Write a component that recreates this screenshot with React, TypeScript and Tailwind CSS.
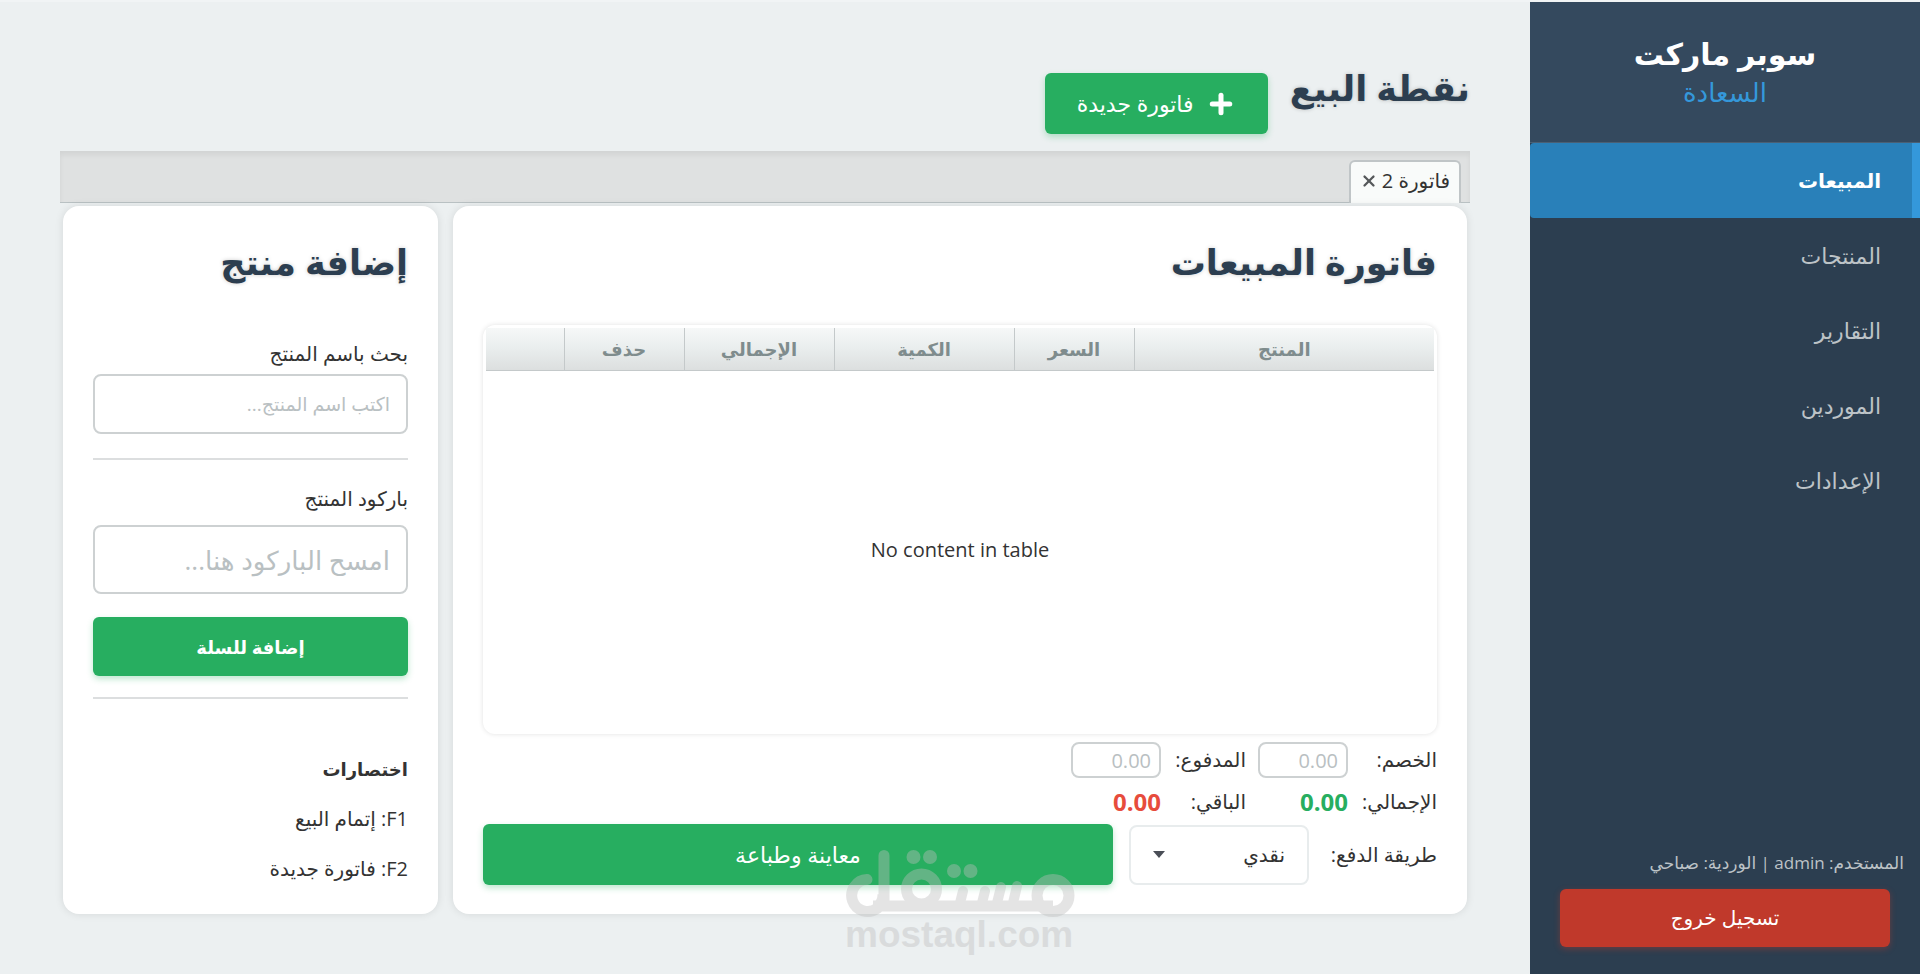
import { Plus, X } from "lucide-react";

const navItems = ["المبيعات", "المنتجات", "التقارير", "الموردين", "الإعدادات"];

const columns = [
  { label: "المنتج", width: "w-[300px]" },
  { label: "السعر", width: "w-[120px]" },
  { label: "الكمية", width: "w-[180px]" },
  { label: "الإجمالي", width: "w-[150px]" },
  { label: "حذف", width: "w-[120px]" },
  { label: "", width: "" },
];

const greenButton = "rounded-md bg-[#27ae60] text-white shadow-[0_3px_6px_rgba(39,174,96,0.3)]";
const field =
  "w-full rounded-lg border-2 border-[#cdd1d2] bg-white text-[#333] placeholder:text-[#b9c0c2] placeholder:opacity-100";
const title = "font-bold text-[#2c3e50] [text-shadow:0_0_4px_rgba(0,0,0,0.2)]";

function Sidebar() {
  return (
    <aside className="flex w-[390px] shrink-0 flex-col bg-[#2c3e50]">
      <div className="flex h-[141px] flex-col items-center border-b border-[#4a6075] bg-[#34495e] pt-8">
        <p className="text-[30px] leading-10 font-bold text-white">سوبر ماركت</p>
        <p className="text-[26px] leading-9 text-[#3498db]">السعادة</p>
      </div>

      <nav className="flex flex-col">
        {navItems.map((item, i) => (
          <a
            key={item}
            href="#"
            aria-current={i === 0 ? "page" : undefined}
            className={
              i === 0
                ? "flex h-[75px] items-center rounded-l-sm border-r-8 border-[#3498db] bg-[#2980b9] pr-[31px] text-xl font-bold text-white"
                : "flex h-[75px] items-center pr-[39px] text-[22px] text-[#bdc3c7]"
            }
          >
            {item}
          </a>
        ))}
      </nav>

      <div className="mt-auto pb-[27px]">
        <p className="px-4 text-[17px] leading-6 text-[#bdc3c7]">المستخدم: admin | الوردية: صباحي</p>
        <div className="px-[30px] pt-3.5">
          <button className="h-[58px] w-full rounded-md bg-[#c0392b] text-xl text-white shadow-[0_2px_6px_rgba(192,57,43,0.4)]">
            تسجيل خروج
          </button>
        </div>
      </div>
    </aside>
  );
}

function InvoiceTable() {
  return (
    <div className="flex flex-1 flex-col rounded-xl bg-white px-[3px] pt-[3px] shadow-[0_0_5px_rgba(0,0,0,0.12)]">
      <table className="h-full w-full flex-1 table-fixed border-collapse">
        <thead>
          <tr className="h-[42px] bg-linear-to-b from-[#f6f8f8] via-[#e9eded] to-[#dcdfdf]">
            {columns.map((col) => (
              <th
                key={col.label}
                className={`${col.width} border-b border-l border-[#c4c9ca] text-lg font-bold text-[#7f8c8d] last:border-l-0`}
              >
                {col.label}
              </th>
            ))}
          </tr>
        </thead>
        <tbody>
          <tr>
            <td colSpan={6} className="pb-1 text-center text-xl text-[#333]">
              No content in table
            </td>
          </tr>
        </tbody>
      </table>
    </div>
  );
}

function InvoiceCard() {
  return (
    <section className="flex min-w-0 flex-1 flex-col rounded-2xl bg-white px-[30px] pt-7 pb-[29px] shadow-[0_0_8px_rgba(0,0,0,0.1)]">
      <h2 className={`${title} mb-[35px] text-[35px] leading-[56px]`}>فاتورة المبيعات</h2>
      <InvoiceTable />

      <div className="mt-2 grid grid-cols-[77px_90px_73px_90px] items-center gap-x-3 gap-y-1 text-xl text-[#333]">
        <label htmlFor="discount">الخصم:</label>
        <input id="discount" placeholder="0.00" className={`${field} h-9 px-2`} />
        <label htmlFor="paid">المدفوع:</label>
        <input id="paid" placeholder="0.00" className={`${field} h-9 px-2`} />
        <span>الإجمالي:</span>
        <output className="text-2xl leading-10 font-bold text-[#27ae60]">0.00</output>
        <span>الباقي:</span>
        <output className="text-2xl leading-10 font-bold text-[#e74c3c]">0.00</output>
      </div>

      <div className="mt-0.5 flex items-center gap-4 text-xl text-[#333]">
        <label htmlFor="payment" className="w-28 whitespace-nowrap">
          طريقة الدفع:
        </label>
        <div className="relative">
          <select
            id="payment"
            className="h-[60px] w-[180px] appearance-none rounded-lg border-2 border-[#e8eced] bg-white px-[22px] text-xl"
          >
            <option>نقدي</option>
          </select>
          <svg viewBox="0 0 12 7" className="pointer-events-none absolute top-[26px] left-6 h-[7px] w-3 fill-[#4a4e57]">
            <path d="M0 0h12L6 7z" />
          </svg>
        </div>
        <button className={`${greenButton} h-[61px] flex-1 text-[22px]`}>معاينة وطباعة</button>
      </div>
    </section>
  );
}

function AddProductCard() {
  return (
    <section className="flex w-[375px] shrink-0 flex-col rounded-2xl bg-white px-[30px] pt-7 pb-5 text-xl text-[#333] shadow-[0_0_8px_rgba(0,0,0,0.1)]">
      <h2 className={`${title} mb-9 text-[35px] leading-[56px]`}>إضافة منتج</h2>

      <label htmlFor="product-name" className="mt-3.5 mb-1.5 leading-7">
        بحث باسم المنتج
      </label>
      <input id="product-name" placeholder="اكتب اسم المنتج..." className={`${field} h-[60px] px-4 text-[19px]`} />

      <hr className="mt-6 border-t-2 border-[#dcdedf]" />

      <label htmlFor="barcode" className="mt-[25px] mb-3 leading-7">
        باركود المنتج
      </label>
      <input id="barcode" placeholder="امسح الباركود هنا..." className={`${field} h-[69px] px-4 text-[26px]`} />

      <button className={`${greenButton} mt-[23px] h-[59px] text-lg font-bold`}>إضافة للسلة</button>

      <hr className="mt-[21px] border-t-2 border-[#dcdedf]" />

      <div className="mt-auto">
        <h3 className="text-lg leading-[50px] font-bold">اختصارات</h3>
        <p className="leading-[50px]">F1: إتمام البيع</p>
        <p className="leading-[50px]">F2: فاتورة جديدة</p>
      </div>
    </section>
  );
}

function Watermark() {
  return (
    <div
      dir="ltr"
      className="pointer-events-none absolute bottom-[22px] left-[845px] w-[230px] text-[#bebebe] opacity-40"
    >
      <svg viewBox="0 0 230 69" className="h-[69px] w-[230px]" fill="none" stroke="currentColor" strokeWidth="11">
        <path d="M22 30.500a16 16 0 1 0 10 29M39 56V6.500" strokeLinecap="round" />
        <path d="M28 57H208" />
        <path d="M31 59a16 16 0 0 0 7-14" />
        <circle cx="208" cy="46.500" r="16" />
        <circle cx="76.500" cy="40" r="15" />
        <path d="M115 54l3-12M137 54l3-12M152 54l4-16M168 54l4-17" strokeWidth="10" strokeLinecap="round" />
        <g fill="currentColor" stroke="none">
          <circle cx="68.500" cy="8" r="7" />
          <circle cx="85" cy="8" r="7" />
          <circle cx="109" cy="22" r="7" />
          <circle cx="125.500" cy="22" r="7" />
        </g>
      </svg>
      <p className="font-['Liberation_Sans',sans-serif] text-[37px] leading-[34px] font-bold">mostaql.com</p>
    </div>
  );
}

export default function App() {
  return (
    <div
      dir="rtl"
      className="relative flex min-h-screen border-t-2 border-[#f1f4f5] bg-[#ecf0f1] font-['Open_Sans','DejaVu_Sans',sans-serif]"
    >
      <Sidebar />

      <main className="flex min-w-0 flex-1 flex-col px-[60px] pt-[60px] pb-[60px]">
        <header className="flex items-start gap-[22px]">
          <h1 className={`${title} text-[35px] leading-[52px]`}>نقطة البيع</h1>
          <button className={`${greenButton} mt-[11px] flex h-[61px] w-[223px] items-center justify-center gap-3 text-[22px]`}>
            <Plus size={30} strokeWidth={4} />
            فاتورة جديدة
          </button>
        </header>

        <div
          role="tablist"
          className="mt-[17px] flex h-[52px] items-end border-b border-[#b9c1c3] bg-[#dfe1e1] px-[9px] shadow-[inset_0_4px_5px_rgba(0,0,0,0.06)]"
        >
          <div className="-mb-px flex h-[43px] w-[112px] items-center justify-center gap-1 rounded-t-md border-2 border-b-0 border-[#c0c5c7] bg-[#f9fbfa] pb-1 text-xl text-[#333]">
            <button role="tab" aria-selected="true" className="whitespace-nowrap">
              فاتورة 2
            </button>
            <button aria-label="إغلاق" className="text-[#55585a]">
              <X size={18} strokeWidth={3} />
            </button>
          </div>
        </div>

        <div className="mt-[3px] flex flex-1 gap-[15px] px-[3px]">
          <InvoiceCard />
          <AddProductCard />
        </div>
      </main>

      <Watermark />
    </div>
  );
}
